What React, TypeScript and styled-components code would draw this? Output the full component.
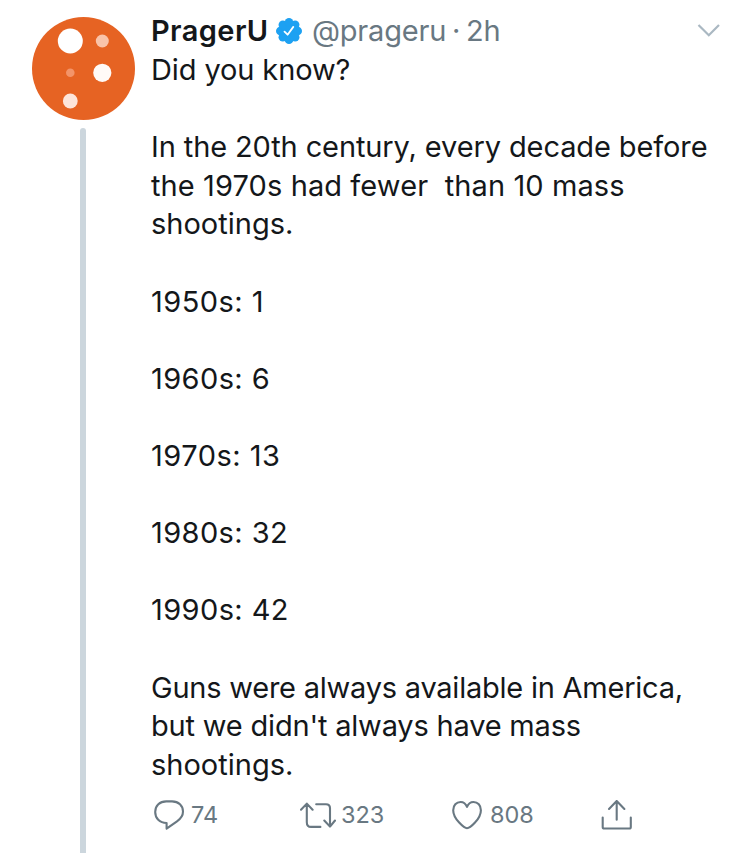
import React from "react";
import styled, { createGlobalStyle } from "styled-components";

const GlobalStyle = createGlobalStyle`
  * { box-sizing: border-box; }
  body { margin: 0; background: #fff; }
`;

const Tweet = styled.article`
  display: flex;
  width: 750px;
  height: 853px;
  overflow: hidden;
  background: #fff;
  color: #14171a;
  font-family: Inter, "Liberation Sans", sans-serif;
`;

const ThreadColumn = styled.div`
  display: flex;
  flex-direction: column;
  flex: none;
  width: 103px;
  margin: 17px 16px 0 32px;
`;

const Avatar = styled.svg`
  display: block;
  flex: none;
  width: 103px;
  height: 103px;
`;

const ThreadLine = styled.div`
  flex: 1;
  width: 6px;
  margin: 8px 0 0 48px;
  border-radius: 3px 3px 0 0;
  background: #ccd6dd;
`;

const Content = styled.div`
  display: flex;
  flex-direction: column;
  flex: 1;
  padding-top: 11px;
`;

const Header = styled.header`
  display: flex;
  align-items: center;
  height: 39px;
  padding-right: 30px;
  font-size: 29px;
  line-height: 39px;
  white-space: pre;
`;

const Name = styled.span`
  width: 125px;
  font-weight: 600;
  letter-spacing: 0.4px;
`;

const Badge = styled.svg`
  display: block;
  width: 26px;
  height: 26px;
  margin-right: 10px;
`;

const Handle = styled.span`
  width: 154px;
  color: #697882;
  letter-spacing: -0.2px;

  & + & {
    width: auto;
  }
`;

const Separator = styled.span`
  margin-left: -14px;
  width: 14px;
  color: #697882;
`;

const Chevron = styled.svg`
  display: block;
  width: 23px;
  height: 14px;
  margin-left: auto;
`;

const Body = styled.div`
  padding-top: 1px;
  font-size: 29px;
  line-height: 38.6px;
`;

const Line = styled.div<{ $tracking: number }>`
  height: 38.6px;
  white-space: pre;
  letter-spacing: ${(p) => p.$tracking}px;
`;

const Actions = styled.footer`
  display: flex;
  align-items: center;
  height: 34px;
  margin-top: 14px;
  color: #697882;
`;

const Action = styled.div<{ $width: number }>`
  display: flex;
  align-items: center;
  flex: none;
  gap: 5px;
  width: ${(p) => p.$width}px;
`;

const Icon = styled.svg`
  display: block;
  flex: none;
  height: 34px;
  fill: none;
  stroke: currentColor;
  stroke-width: 2.1;
  stroke-linecap: round;
  stroke-linejoin: round;
`;

const Count = styled.span`
  font-size: 23.5px;
  line-height: 34px;
`;

const lines: { text: string; tracking: number }[] = [
  { text: "Did you know?", tracking: -0.12 },
  { text: "", tracking: 0 },
  { text: "In the 20th century, every decade before", tracking: -0.11 },
  { text: "the 1970s had fewer  than 10 mass", tracking: 0.1 },
  { text: "shootings.", tracking: 0 },
  { text: "", tracking: 0 },
  { text: "1950s: 1", tracking: 0.45 },
  { text: "", tracking: 0 },
  { text: "1960s: 6", tracking: 0.4 },
  { text: "", tracking: 0 },
  { text: "1970s: 13", tracking: 0.5 },
  { text: "", tracking: 0 },
  { text: "1980s: 32", tracking: 0.4 },
  { text: "", tracking: 0 },
  { text: "1990s: 42", tracking: 0.4 },
  { text: "", tracking: 0 },
  { text: "Guns were always available in America,", tracking: -0.23 },
  { text: "but we didn't always have mass", tracking: -0.19 },
  { text: "shootings.", tracking: 0 },
];

const lobes = Array.from({ length: 8 }, (_, i) => {
  const a = (i * Math.PI) / 4;
  return { x: 13 + 8.7 * Math.cos(a), y: 13 + 8.7 * Math.sin(a) };
});

export default function App() {
  return (
    <>
      <GlobalStyle />
      <Tweet>
        <ThreadColumn>
          <Avatar viewBox="0 0 103 103">
            <circle cx="51.5" cy="51.5" r="51.5" fill="#e66323" />
            <circle cx="38.3" cy="24" r="12.5" fill="#fff" />
            <circle cx="70.3" cy="24" r="6.5" fill="#f9c3a9" />
            <circle cx="38.3" cy="55.8" r="4.3" fill="#f39469" />
            <circle cx="70.3" cy="55.8" r="9.1" fill="#fffaf7" />
            <circle cx="38.3" cy="84" r="7.4" fill="#fde5da" />
          </Avatar>
          <ThreadLine />
        </ThreadColumn>
        <Content>
          <Header>
            <Name>PragerU</Name>
            <Badge viewBox="0 0 26 26" fill="#1da1f2">
              <circle cx="13" cy="13" r="10.4" />
              {lobes.map((l, i) => (
                <circle key={i} cx={l.x} cy={l.y} r="4.3" />
              ))}
              <path
                d="M8.5 13.6 L11.6 16.7 L17.3 8.9"
                fill="none"
                stroke="#fff"
                strokeWidth="1.8"
                strokeLinecap="round"
                strokeLinejoin="round"
              />
            </Badge>
            <Handle>@prageru</Handle>
            <Separator>·</Separator>
            <Handle>2h</Handle>
            <Chevron viewBox="0 0 23 14" fill="none" stroke="#aab8c2" strokeWidth="2.2">
              <path d="M1.5 1 L11.8 11.2 L22 1" />
            </Chevron>
          </Header>
          <Body>
            {lines.map((l, i) => (
              <Line key={i} $tracking={l.tracking}>
                {l.text}
              </Line>
            ))}
          </Body>
          <Actions>
            <Action $width={149}>
              <Icon width="35" viewBox="0 0 35 34">
                <path d="M15.6 25 C8.5 25 4.2 20.2 4.2 14 C4.2 7.5 8.8 3.4 15.2 3.4 H21 C27.6 3.4 32 7.6 32 13.6 C32 18 29.6 21 26 23.3 L15.6 30.6 Z" />
              </Icon>
              <Count>74</Count>
            </Action>
            <Action $width={152}>
              <Icon width="36" viewBox="0 0 36 34">
                <path d="M1 11.7 L6.8 5.6 L12.6 11.7 M6.8 6 V24.2 Q6.8 28.9 11 28.9 H20.4 M16.2 6.2 H26 Q30 6.2 30 10.2 V28 M24.3 22.5 L30 28.6 L35 22.5" />
              </Icon>
              <Count>323</Count>
            </Action>
            <Action $width={149}>
              <Icon width="33" viewBox="0 0 33 34">
                <path d="M15 30.2 C12.5 30.2 1.2 21.2 1.2 12.2 C1.2 7.4 4.3 4 8.6 4 C11.5 4 13.8 5.8 15 8.9 C16.2 5.8 18.7 4 21.5 4 C25.8 4 28.9 7.4 28.9 12.2 C28.9 21.2 17.8 30.2 15 30.2 Z" />
              </Icon>
              <Count>808</Count>
            </Action>
            <Action $width={40}>
              <Icon width="33" viewBox="0 0 33 34">
                <path d="M1.7 19.5 V28.9 Q1.7 30.5 3.3 30.5 H28.2 Q29.8 30.5 29.8 28.9 V19.5 M15.7 21.8 V3 M8 11 L15.7 3.1 L23.4 11" />
              </Icon>
            </Action>
          </Actions>
        </Content>
      </Tweet>
    </>
  );
}
